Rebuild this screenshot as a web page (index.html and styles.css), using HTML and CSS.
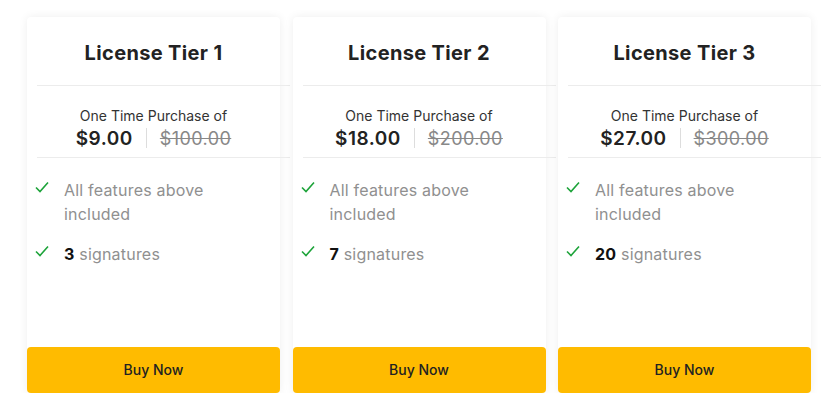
FILE: index.html
```html
<!DOCTYPE html>
<html>
<head>
<meta charset="utf-8">
<link rel="stylesheet" href="styles.css">
</head>
<body>
<div class="tiers">
  <div class="card">
    <h2 class="title">License Tier 1</h2>
    <div class="rule"></div>
    <div class="price-block">
      <div class="price-label">One Time Purchase of</div>
      <div class="prices"><span class="now">$9.00</span><span class="sep"></span><span class="was">$100.00</span></div>
    </div>
    <div class="rule"></div>
    <ul class="features">
      <li><svg class="check" viewBox="0 0 14 12"><path d="M1 6.5 L5 10.5 L13 1.5" fill="none" stroke="#1ca339" stroke-width="1.6"/></svg><span>All features above included</span></li>
      <li><svg class="check" viewBox="0 0 14 12"><path d="M1 6.5 L5 10.5 L13 1.5" fill="none" stroke="#1ca339" stroke-width="1.6"/></svg><span><b>3</b> signatures</span></li>
    </ul>
    <button class="buy">Buy Now</button>
  </div>
  <div class="card">
    <h2 class="title">License Tier 2</h2>
    <div class="rule"></div>
    <div class="price-block">
      <div class="price-label">One Time Purchase of</div>
      <div class="prices"><span class="now">$18.00</span><span class="sep"></span><span class="was">$200.00</span></div>
    </div>
    <div class="rule"></div>
    <ul class="features">
      <li><svg class="check" viewBox="0 0 14 12"><path d="M1 6.5 L5 10.5 L13 1.5" fill="none" stroke="#1ca339" stroke-width="1.6"/></svg><span>All features above included</span></li>
      <li><svg class="check" viewBox="0 0 14 12"><path d="M1 6.5 L5 10.5 L13 1.5" fill="none" stroke="#1ca339" stroke-width="1.6"/></svg><span><b>7</b> signatures</span></li>
    </ul>
    <button class="buy">Buy Now</button>
  </div>
  <div class="card">
    <h2 class="title">License Tier 3</h2>
    <div class="rule"></div>
    <div class="price-block">
      <div class="price-label">One Time Purchase of</div>
      <div class="prices"><span class="now">$27.00</span><span class="sep"></span><span class="was">$300.00</span></div>
    </div>
    <div class="rule"></div>
    <ul class="features">
      <li><svg class="check" viewBox="0 0 14 12"><path d="M1 6.5 L5 10.5 L13 1.5" fill="none" stroke="#1ca339" stroke-width="1.6"/></svg><span>All features above included</span></li>
      <li><svg class="check" viewBox="0 0 14 12"><path d="M1 6.5 L5 10.5 L13 1.5" fill="none" stroke="#1ca339" stroke-width="1.6"/></svg><span><b>20</b> signatures</span></li>
    </ul>
    <button class="buy">Buy Now</button>
  </div>
</div>
</body>
</html>
```
FILE: styles.css
```css
* { box-sizing: border-box; }
html, body { margin: 0; background: #fff; }
body { font-family: Inter, "Open Sans", sans-serif; color: #222; }
.tiers {
  display: grid;
  grid-template-columns: repeat(3, 253px);
  column-gap: 12.5px;
  padding: 17px 0 0 27px;
}
.card {
  background: #fff;
  border-radius: 4px;
  box-shadow: 0 0 10px rgba(0,0,0,0.07);
  height: 376px;
  display: flex;
  flex-direction: column;
}
.title {
  margin: 0;
  height: 68px;
  display: flex;
  align-items: center;
  justify-content: center;
  font-size: 20px;
  font-weight: 700;
  letter-spacing: 0.35px;
  color: #222;
  padding-top: 4px;
}
.rule {
  height: 1px;
  background: #ececec;
  width: 100%;
  margin-left: 10px;
  flex: none;
}
.price-block {
  height: 71px;
  padding-top: 21px;
  text-align: center;
}
.price-label { font-size: 14px; color: #333; line-height: 18px; }
.prices {
  display: flex;
  justify-content: center;
  align-items: center;
  margin-top: 1px;
  height: 24px;
}
.now { font-size: 19px; font-weight: 600; color: #222; letter-spacing: 0.5px; }
.sep { width: 1px; height: 20px; background: #ddd; margin: 0 13px; }
.was { font-size: 18px; color: #888; text-decoration: line-through; letter-spacing: 0.4px; }
.features {
  list-style: none;
  margin: 0;
  padding: 20px 0 0 8px;
  flex: 1;
}
.features li {
  display: flex;
  align-items: flex-start;
  margin-bottom: 16px;
}
.check { width: 14px; height: 12px; margin: 3px 15px 0 0; flex: none; }
.features span {
  font-size: 16px;
  line-height: 24px;
  color: #909090;
  letter-spacing: 0.2px;
  width: 150px;
}
.features b { color: #111; font-weight: 700; }
.buy {
  height: 46px;
  border: 0;
  border-radius: 4px;
  background: #ffbb00;
  font-family: inherit;
  font-size: 14px;
  font-weight: 500;
  color: #222;
  padding-bottom: 3px;
  cursor: pointer;
}
```
